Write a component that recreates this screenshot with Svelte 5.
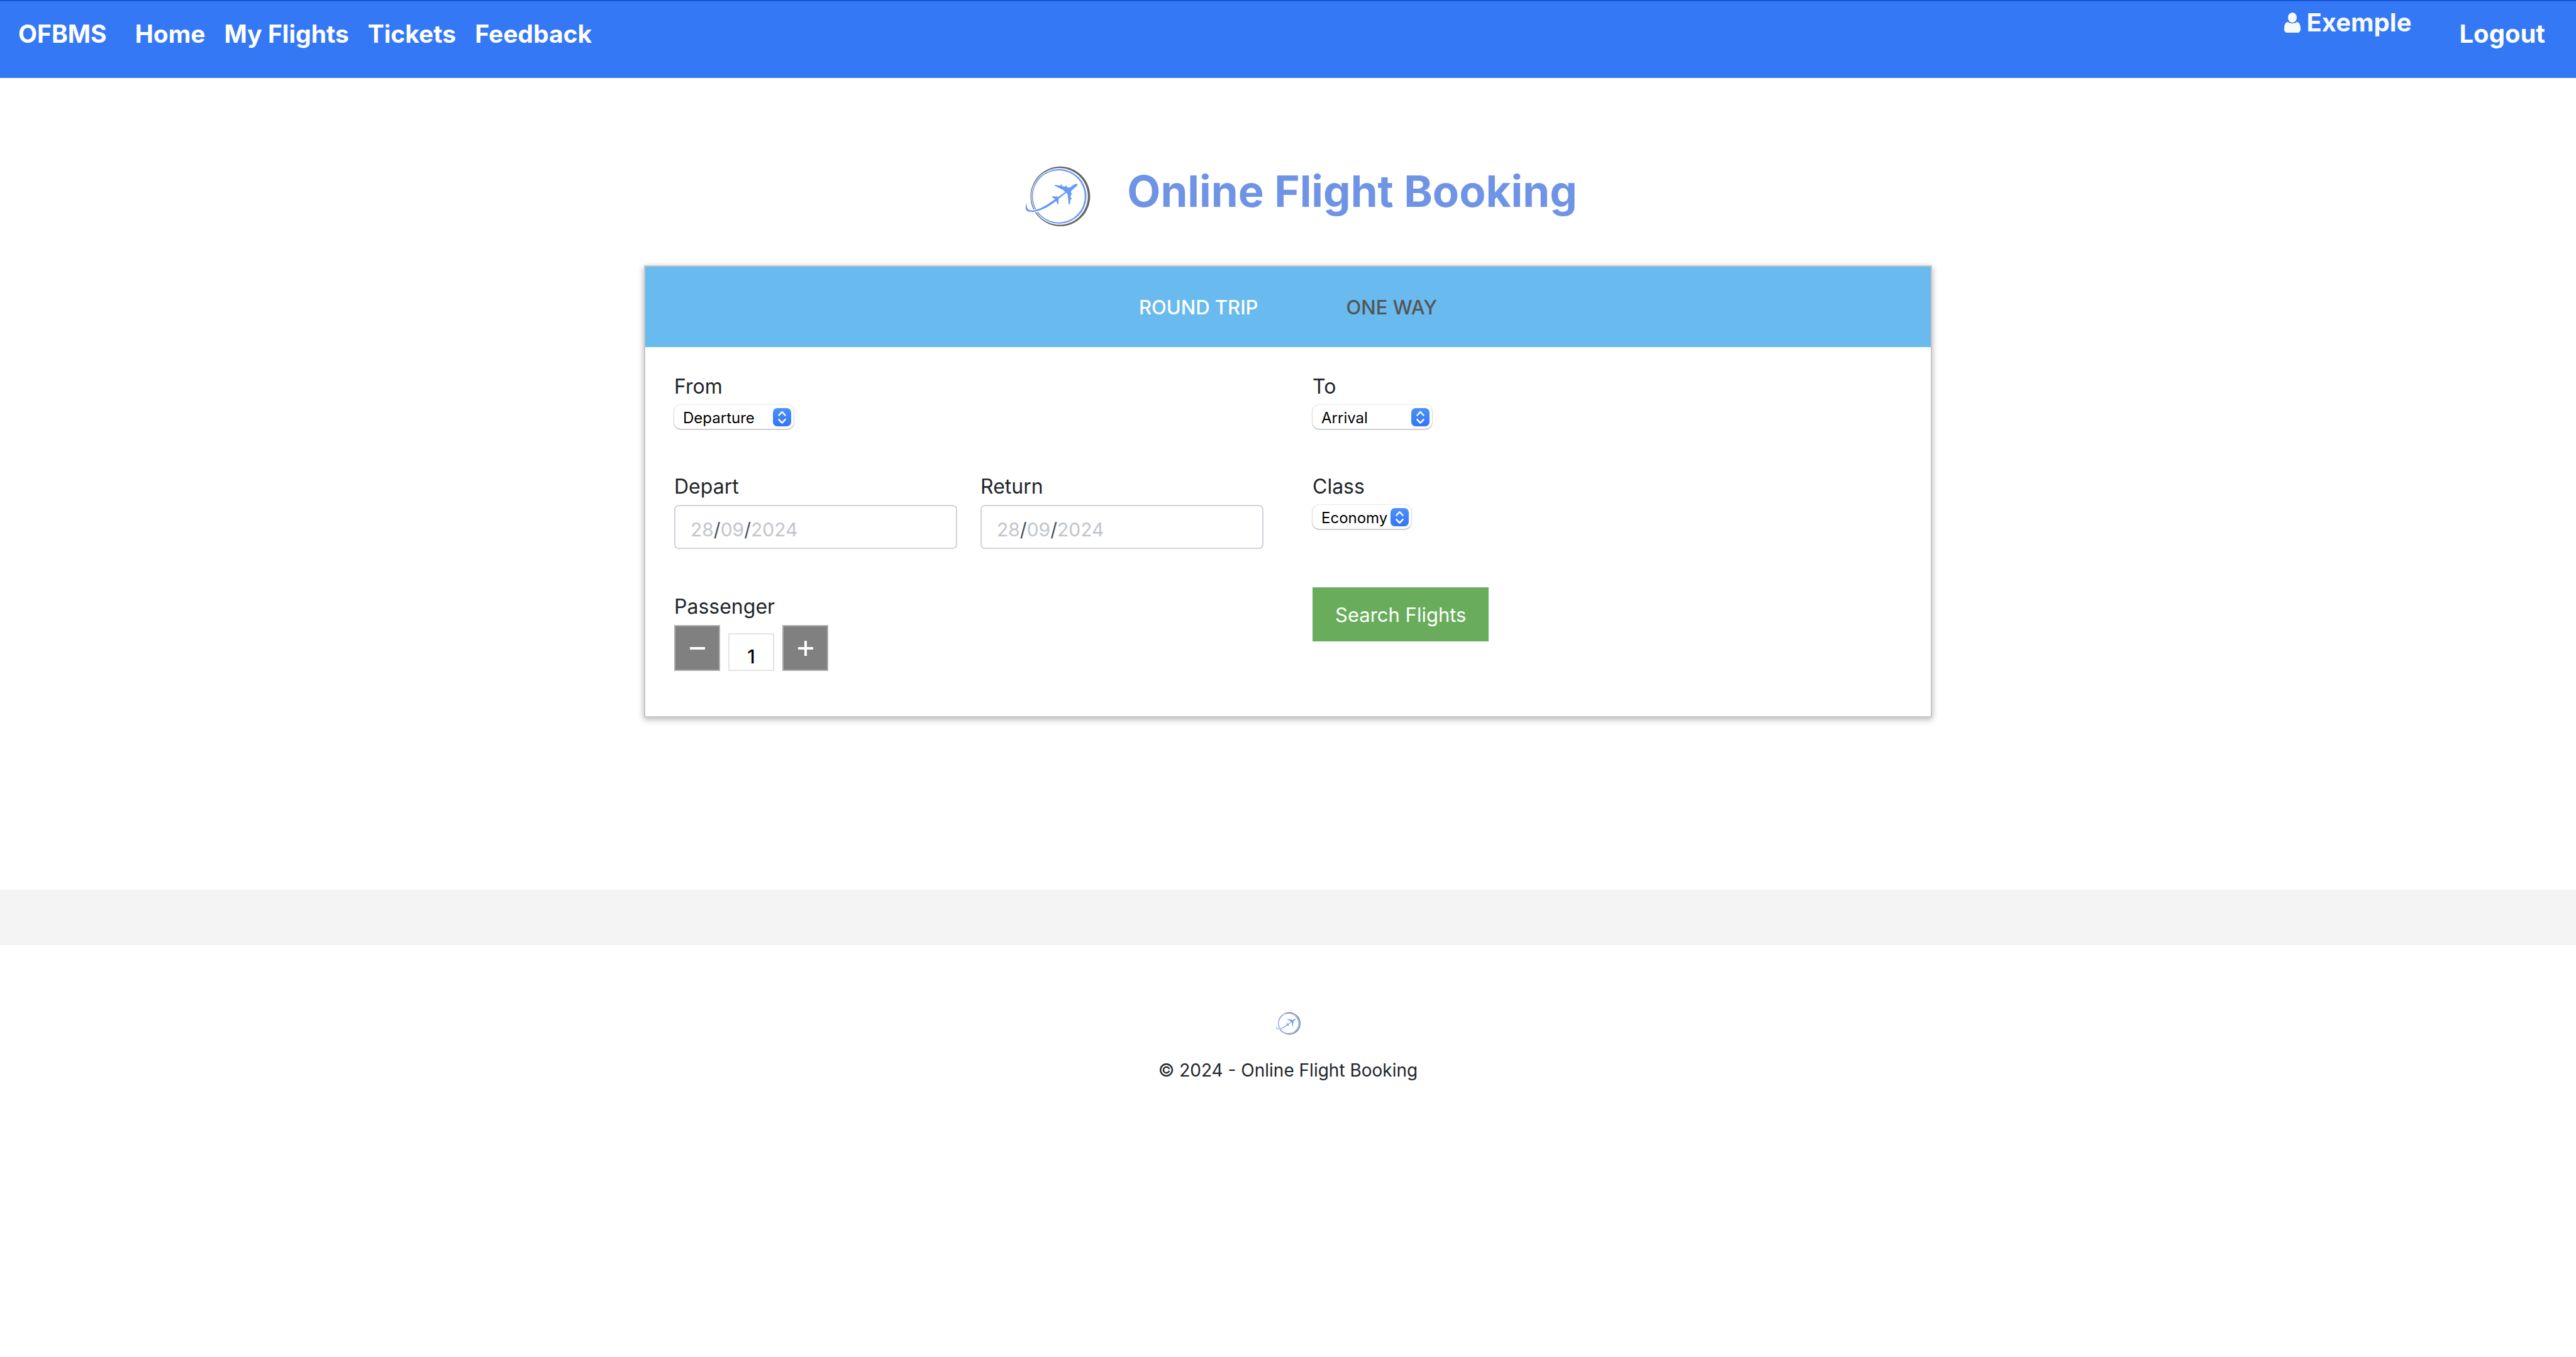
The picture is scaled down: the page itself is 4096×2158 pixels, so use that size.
<script>
  let tripType = $state('round');
  let passengers = $state(1);
  let depart = $state('');
  let back = $state('');

  const links = ['Home', 'My Flights', 'Tickets', 'Feedback'];
</script>

{#snippet logo()}
  <svg viewBox="68 52 342 320" aria-hidden="true">
    <path fill="#666" fill-rule="evenodd" d="M96 213a156 156 0 1 0 312 0a156 156 0 1 0 -312 0zM100 213a148 148 0 1 0 296 0a148 148 0 1 0 -296 0z" />
    <path fill="#6699f8" fill-rule="evenodd" d="M103 213a143 143 0 1 0 286 0a143 143 0 1 0 -286 0zM108 213a136 136 0 1 0 272 0a136 136 0 1 0 -272 0z" />
    <path fill="#fff" d="M88 276C105 286 125 282 144 275L146 292C125 298 105 300 90 296z" />
    <path
      fill="#6699f8"
      d="M77 249C68 265 69 280 77 288C86 296 103 295 117 293C160 287 199 262 231 237L238 256L242 250L243 226L284 194L290 203L297 259L303 250L309 184L328 168C337 161 343 154 342 149C339 145 330 149 322 152L301 168L251 157L224 153L222 157L266 179L278 190L240 217L234 214L210 213L208 217L225 228C190 252 155 278 118 285C103 288 90 287 83 279C77 272 75 262 77 249z"
    />
    <g fill="#6699f8">
      <ellipse cx="257" cy="155" rx="4" ry="5" />
      <ellipse cx="282" cy="161" rx="4" ry="6" />
      <ellipse cx="309" cy="200" rx="6" ry="4" />
      <ellipse cx="307" cy="225" rx="5" ry="4" />
    </g>
  </svg>
{/snippet}

{#snippet picker()}
  <svg class="arrows" viewBox="0 0 96 96" aria-hidden="true">
    <path d="M31 38L48 20L65 38M31 60L48 78L65 60" fill="none" stroke="#fff" stroke-width="8" stroke-linecap="round" stroke-linejoin="round" />
  </svg>
{/snippet}

{#snippet dateHint()}
  <span class="hint" aria-hidden="true">28<b>/</b>09<b>/</b>2024</span>
{/snippet}

<nav class="navbar">
  <a class="brand" href="#top">OFBMS</a>
  <ul class="links">
    {#each links as link}
      <li><a href="#{link.toLowerCase().replace(' ', '-')}">{link}</a></li>
    {/each}
  </ul>
  <div class="account">
    <span class="user">
      <svg viewBox="0 0 26 32" aria-hidden="true">
        <ellipse cx="13" cy="8" rx="7" ry="8" fill="#f8f9fa" />
        <path fill="#f8f9fa" d="M6 15C9 18 17 18 20 15C24 15 26 19 26 26C26 30 24 32 21 32H5C2 32 0 30 0 26C0 19 2 15 6 15z" />
      </svg>
      Exemple
    </span>
    <a class="logout" href="#logout">Logout</a>
  </div>
</nav>

<main>
  <header class="title">
    <span class="mark">{@render logo()}</span>
    <h1>Online Flight Booking</h1>
  </header>

  <form class="panel" onsubmit={(e) => e.preventDefault()}>
    <div class="tabs" role="tablist">
      <button type="button" role="tab" class:active={tripType === 'round'} aria-selected={tripType === 'round'} onclick={() => (tripType = 'round')}>ROUND TRIP</button>
      <button type="button" role="tab" class:active={tripType === 'one'} aria-selected={tripType === 'one'} onclick={() => (tripType = 'one')}>ONE WAY</button>
    </div>

    <div class="fields">
      <div class="column">
        <div class="field">
          <label for="from">From</label>
          <div class="select">
            <select id="from"><option>Departure</option></select>
            {@render picker()}
          </div>
        </div>
        <div class="dates">
          <div class="field">
            <label for="depart">Depart</label>
            <div class="date">
              <input id="depart" type="text" bind:value={depart} />
              {#if !depart}{@render dateHint()}{/if}
            </div>
          </div>
          <div class="field">
            <label for="return">Return</label>
            <div class="date">
              <input id="return" type="text" bind:value={back} />
              {#if !back}{@render dateHint()}{/if}
            </div>
          </div>
        </div>
        <div class="field">
          <label for="passengers">Passenger</label>
          <div class="stepper">
            <button type="button" aria-label="Fewer passengers" onclick={() => (passengers = Math.max(1, passengers - 1))}>
              <svg viewBox="0 0 24 24" aria-hidden="true"><path d="M0 12H24" stroke="#fff" stroke-width="4" /></svg>
            </button>
            <input id="passengers" type="text" inputmode="numeric" bind:value={passengers} />
            <button type="button" aria-label="More passengers" onclick={() => (passengers += 1)}>
              <svg viewBox="0 0 24 24" aria-hidden="true"><path d="M0 12H24M12 0V24" stroke="#fff" stroke-width="4" /></svg>
            </button>
          </div>
        </div>
      </div>

      <div class="column">
        <div class="field">
          <label for="to">To</label>
          <div class="select">
            <select id="to"><option>Arrival</option></select>
            {@render picker()}
          </div>
        </div>
        <div class="field">
          <label for="class">Class</label>
          <div class="select compact">
            <select id="class"><option>Economy</option><option>Business</option></select>
            {@render picker()}
          </div>
        </div>
        <button type="submit" class="search">Search Flights</button>
      </div>
    </div>
  </form>
</main>

<div class="band"></div>

<footer>
  {@render logo()}
  <p>© 2024 - Online Flight Booking</p>
</footer>

<style>
  :global(body) {
    margin: 0;
    background: #fff;
    color: #212529;
    font-family: Inter, "Liberation Sans", sans-serif;
  }

  button,
  input,
  select {
    box-sizing: border-box;
    margin: 0;
    font-family: inherit;
  }

  svg {
    display: block;
    flex: none;
  }

  .navbar {
    box-sizing: border-box;
    display: flex;
    align-items: flex-start;
    min-height: 124px;
    padding: 10px 49px 0 29px;
    border-top: 2px solid #1553d2;
    background: #3478f6;
    font-size: 39px;
    font-weight: 700;
    line-height: 48px;
  }

  .navbar a {
    color: #fff;
    text-decoration: none;
  }

  .brand,
  .links,
  .logout {
    padding-top: 18px;
  }

  .links {
    display: flex;
    gap: 30px;
    margin: 0 0 0 45px;
    padding-left: 0;
    list-style: none;
  }

  .account {
    display: flex;
    align-items: flex-start;
    gap: 76px;
    margin-left: auto;
    font-size: 40px;
  }

  .user {
    display: flex;
    align-items: center;
    gap: 10px;
    color: #f8f9fa;
  }

  .user svg {
    width: 26px;
    height: 32px;
  }

  main {
    display: flex;
    flex-direction: column;
    align-items: center;
    padding: 132px 0 274px;
  }

  .title {
    display: flex;
    align-items: flex-start;
    gap: 58px;
    min-height: 110px;
    margin-bottom: 56px;
  }

  .mark {
    padding: 7px 0 0 42px;
  }

  .mark svg {
    width: 104px;
    height: 98px;
  }

  h1 {
    margin: 0;
    color: #6f94e6;
    font-size: 69px;
    font-weight: 700;
    line-height: 96px;
  }

  .panel {
    box-sizing: border-box;
    width: 50%;
    border: 2px solid #c6c6c6;
    background: #fff;
    box-shadow: 0 3px 10px rgba(0, 0, 0, 0.3);
  }

  .tabs {
    display: flex;
    justify-content: center;
    gap: 140px;
    height: 128px;
    background: #68baef;
  }

  .tabs button {
    padding: 0;
    border: 0;
    background: none;
    color: #555;
    font-size: 31px;
    font-weight: 500;
  }

  .tabs button.active {
    color: #fff;
  }

  .fields {
    display: grid;
    grid-template-columns: 1fr 1fr;
    gap: 78px;
    padding: 41px 46px 72px;
  }

  .column {
    display: flex;
    flex-direction: column;
    align-items: stretch;
    gap: 70px;
  }

  .field {
    display: flex;
    flex-direction: column;
    gap: 7px;
  }

  label {
    font-size: 32px;
    line-height: 44px;
  }

  .select {
    display: grid;
    align-items: center;
    width: 190px;
  }

  .select.compact {
    width: 157px;
  }

  .select > :global(*) {
    grid-area: 1 / 1;
  }

  select {
    width: 100%;
    height: 38px;
    padding: 2px 0 0 14px;
    border: 0;
    border-radius: 10px;
    appearance: none;
    background: #fff;
    box-shadow: 0 0 2px rgba(0, 0, 0, 0.25), 0 1px 2px rgba(0, 0, 0, 0.3);
    color: #000;
    font-size: 24px;
    font-weight: 400;
  }

  .arrows {
    justify-self: end;
    width: 29px;
    height: 29px;
    margin-right: 4px;
    border-radius: 7px;
    background: linear-gradient(#4b91f8, #3376f6);
    pointer-events: none;
  }

  .dates {
    display: grid;
    grid-template-columns: 1fr 1fr;
    gap: 37px;
  }

  .date {
    display: grid;
  }

  .date > :global(*) {
    grid-area: 1 / 1;
  }

  .date input {
    width: 100%;
    height: 70px;
    padding: 8px 26px 0;
    border: 2px solid #ced4da;
    border-radius: 7px;
    background: #fff;
    color: #495057;
    font-size: 30px;
  }

  .hint {
    align-self: center;
    padding: 8px 26px 0;
    color: #c2c5cb;
    font-size: 30px;
    pointer-events: none;
  }

  .hint b {
    color: #495057;
    font-weight: 400;
  }

  .stepper {
    display: flex;
    align-items: flex-end;
    gap: 13px;
  }

  .stepper button {
    display: grid;
    place-items: center;
    width: 73px;
    height: 73px;
    padding: 0;
    border: 2px solid #adadad;
    background: #808080;
  }

  .stepper svg {
    width: 24px;
    height: 24px;
  }

  .stepper input {
    width: 73px;
    height: 60px;
    padding: 14px 0 0;
    border: 2px solid #e3e3e3;
    background: #fff;
    color: #000;
    font-size: 30px;
    font-weight: 500;
    text-align: center;
  }

  .search {
    align-self: flex-start;
    height: 86px;
    margin-top: 23px;
    padding: 0 36px;
    border: 0;
    background: #69ad5c;
    color: #fff;
    font-size: 31px;
  }

  .band {
    height: 88px;
    background: #f4f4f4;
  }

  footer {
    display: flex;
    flex-direction: column;
    align-items: center;
    gap: 34px;
    padding: 106px 0;
  }

  footer svg {
    width: 39px;
    height: 37px;
  }

  footer p {
    margin: 0;
    font-size: 28px;
    line-height: 44px;
  }
</style>
